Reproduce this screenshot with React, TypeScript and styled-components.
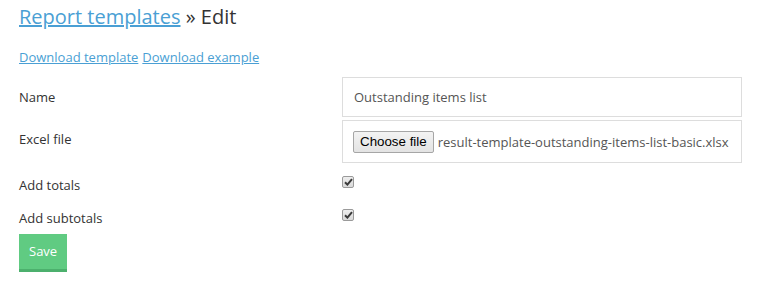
import React from "react";
import styled, { createGlobalStyle } from "styled-components";

const Global = createGlobalStyle`
  html, body { margin: 0; padding: 0; background: #fff; }
  body { font-family: "Open Sans", "Liberation Sans", sans-serif; font-size: 13px; color: #333; }
  * { box-sizing: border-box; }
`;

const Page = styled.div`
  padding: 3px 43px 0 19px;
`;

const Title = styled.h1`
  margin: 0;
  font-size: 20px;
  line-height: 28px;
  font-weight: 400;
  color: #333;
`;

const TitleLink = styled.a`
  color: #4a9fd4;
  text-decoration: underline;
`;

const Links = styled.div`
  margin-top: 16px;
  line-height: 20px;
  display: flex;
  gap: 4px;
`;

const Link = styled.a`
  color: #4a9fd4;
  text-decoration: underline;
`;

const Form = styled.form`
  margin-top: 10px;
  display: flex;
  flex-direction: column;
`;

const Row = styled.div<{ $h: number; $mt?: number }>`
  display: grid;
  grid-template-columns: 323px 400px;
  align-items: start;
  height: ${(p) => p.$h}px;
  margin-top: ${(p) => p.$mt ?? 0}px;
`;

const Label = styled.label<{ $pt: number }>`
  padding-top: ${(p) => p.$pt}px;
  line-height: 20px;
  color: #333;
`;

const TextInput = styled.input`
  width: 400px;
  height: 40px;
  border: 1px solid #dddddd;
  padding: 0 11px;
  font-family: "Open Sans", "Liberation Sans", sans-serif;
  font-size: 13px;
  color: #555;
  outline: none;
`;

const FileBox = styled.div`
  width: 400px;
  height: 43px;
  border: 1px solid #dddddd;
  display: flex;
  align-items: center;
  padding: 0 10px;
  gap: 4px;
  color: #555;
  white-space: nowrap;
  overflow: hidden;
`;

const FileButton = styled.button`
  font-family: "Liberation Sans", Arial, sans-serif;
  font-size: 13.33px;
  line-height: 16px;
  color: #000;
  height: 22px;
  padding: 2px 6px;
  background: linear-gradient(#f3f3f3, #e3e3e3);
  border: 1px solid #a6a6a6;
  border-radius: 2px;
`;

const Check = styled.span`
  display: inline-flex;
  align-items: center;
  justify-content: center;
  width: 12px;
  height: 12px;
  margin-top: 7px;
  border: 1px solid #9a9a9a;
  border-radius: 2px;
  background: linear-gradient(#eeeeee, #d9d9d9);
`;

const SaveButton = styled.button`
  align-self: flex-start;
  margin-top: -1px;
  height: 38px;
  padding: 0 10px;
  border: none;
  border-bottom: 3px solid #4cb06d;
  background: #60cb82;
  color: #fff;
  font-family: "Open Sans", "Liberation Sans", sans-serif;
  font-size: 13px;
  line-height: 35px;
`;

const CheckMark = () => (
  <svg width="9" height="8" viewBox="0 0 9 8">
    <path d="M1 4.2 L3.4 6.6 L8 1.2" fill="none" stroke="#3a3a3a" strokeWidth="2" />
  </svg>
);

export default function App() {
  return (
    <>
      <Global />
      <Page>
        <Title>
          <TitleLink href="#">Report templates</TitleLink> » Edit
        </Title>
        <Links>
          <Link href="#">Download template</Link>
          <Link href="#">Download example</Link>
        </Links>
        <Form onSubmit={(e) => e.preventDefault()}>
          <Row $h={40}>
            <Label $pt={10}>Name</Label>
            <TextInput defaultValue="Outstanding items list" />
          </Row>
          <Row $h={43} $mt={3}>
            <Label $pt={9}>Excel file</Label>
            <FileBox>
              <FileButton type="button">Choose file</FileButton>
              <span>result-template-outstanding-items-list-basic.xlsx</span>
            </FileBox>
          </Row>
          <Row $h={33} $mt={6}>
            <Label $pt={6}>Add totals</Label>
            <Check><CheckMark /></Check>
          </Row>
          <Row $h={33}>
            <Label $pt={6}>Add subtotals</Label>
            <Check><CheckMark /></Check>
          </Row>
          <SaveButton type="submit">Save</SaveButton>
        </Form>
      </Page>
    </>
  );
}
